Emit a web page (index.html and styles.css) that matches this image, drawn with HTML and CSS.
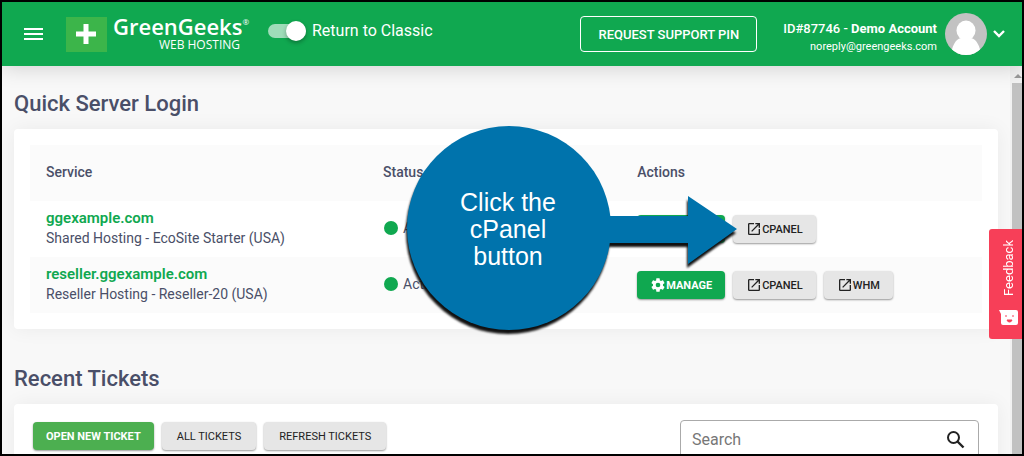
FILE: index.html
```html
<!DOCTYPE html>
<html lang="en">
<head>
<meta charset="utf-8">
<meta name="viewport" content="width=device-width, initial-scale=1">
<title>GreenGeeks Web Hosting</title>
<link rel="stylesheet" href="styles.css">
</head>
<body>
<svg width="0" height="0" class="symbols" aria-hidden="true">
  <symbol id="open" viewBox="0 0 24 24"><path d="M19 19H5V5h7V3H5a2 2 0 0 0-2 2v14a2 2 0 0 0 2 2h14c1.100 0 2-.9 2-2v-7h-2v7zM14 3v2h3.590l-9.830 9.830 1.410 1.410L19 6.410V10h2V3h-7z"/></symbol>
  <symbol id="cog" viewBox="0 0 24 24"><path d="M12 15.500A3.500 3.500 0 0 1 8.500 12 3.500 3.500 0 0 1 12 8.500a3.500 3.500 0 0 1 3.500 3.500 3.500 3.500 0 0 1-3.500 3.500m7.430-2.530c.04-.32.07-.64.07-.97s-.03-.66-.07-1l2.110-1.630c.19-.15.24-.42.12-.64l-2-3.460c-.12-.22-.39-.31-.61-.22l-2.490 1c-.52-.39-1.060-.73-1.690-.98l-.37-2.650A.506.506 0 0 0 14 2h-4c-.25 0-.46.18-.5.420l-.37 2.650c-.63.25-1.170.59-1.690.98l-2.490-1c-.22-.09-.49 0-.61.22l-2 3.460c-.13.22-.07.49.12.64L4.570 11c-.04.34-.07.67-.07 1s.03.65.07.97l-2.110 1.660c-.19.15-.25.42-.12.64l2 3.460c.12.22.39.3.61.22l2.490-1.010c.52.4 1.060.74 1.690.99l.37 2.650c.04.24.25.42.5.42h4c.25 0 .46-.18.5-.42l.37-2.650c.63-.26 1.170-.59 1.690-.99l2.490 1.010c.22.08.49 0 .61-.22l2-3.460c.12-.22.07-.49-.12-.64z"/></symbol>
</svg>

<header class="topbar">
  <button class="icon-btn menu" aria-label="Menu">
    <svg width="20" height="14" viewBox="0 0 20 14"><path d="M0 1h19M0 6h19M0 11h19" stroke="currentColor" stroke-width="2"/></svg>
  </button>
  <a class="logo" href="#">
    <svg width="41" height="35" viewBox="0 0 41 35" aria-hidden="true"><rect width="41" height="35" fill="#3cb54a"/><path d="M20 7v20M10 17h20" stroke="#fff" stroke-width="5"/></svg>
    <span class="brand"><span class="brand-name">GreenGeeks<span class="reg">®</span></span><span class="brand-sub">WEB HOSTING</span></span>
  </a>
  <label class="switch"><input type="checkbox" checked>Return to Classic</label>
  <button class="pin-btn">REQUEST SUPPORT PIN</button>
  <div class="account">
    <div>ID#87746 - <b>Demo Account</b></div>
    <div class="email">noreply@greengeeks.com</div>
  </div>
  <svg class="avatar" width="42" height="42" viewBox="0 0 42 42" role="img" aria-label="Avatar"><defs><clipPath id="disc"><circle cx="21" cy="21" r="21"/></clipPath></defs><g clip-path="url(#disc)"><rect width="42" height="42" fill="#c2c2c2"/><ellipse cx="21" cy="17.500" rx="9.500" ry="10"/><path d="M6 42c1-8 4-16 10-17h10c6 1 9 9 10 17z"/></g></svg>
  <button class="icon-btn" aria-label="Account menu">
    <svg width="14" height="10" viewBox="0 0 14 10"><path d="M2 2l5 5 5-5" fill="none" stroke="currentColor" stroke-width="2.400"/></svg>
  </button>
</header>

<div class="viewport">
  <main>
    <h2>Quick Server Login</h2>
    <section class="card">
      <table>
        <thead><tr><th class="c-service">Service</th><th class="c-status">Status</th><th>Actions</th></tr></thead>
        <tbody>
          <tr>
            <td><a class="host" href="#">ggexample.com</a>Shared Hosting - EcoSite Starter (USA)</td>
            <td><span class="status">Active</span></td>
            <td><div class="actions">
              <button class="btn manage"><svg class="cog"><use href="#cog"/></svg>MANAGE</button>
              <button class="btn"><svg><use href="#open"/></svg>CPANEL</button>
            </div></td>
          </tr>
          <tr>
            <td><a class="host" href="#">reseller.ggexample.com</a>Reseller Hosting - Reseller-20 (USA)</td>
            <td><span class="status">Active</span></td>
            <td><div class="actions">
              <button class="btn manage"><svg class="cog"><use href="#cog"/></svg>MANAGE</button>
              <button class="btn"><svg><use href="#open"/></svg>CPANEL</button>
              <button class="btn"><svg><use href="#open"/></svg>WHM</button>
            </div></td>
          </tr>
        </tbody>
      </table>
    </section>
    <h2 class="second">Recent Tickets</h2>
    <section class="card tickets">
      <div class="actions">
        <button class="btn new">OPEN NEW TICKET</button>
        <button class="btn light">ALL TICKETS</button>
        <button class="btn light">REFRESH TICKETS</button>
      </div>
      <div class="search">
        <input type="text" placeholder="Search" aria-label="Search">
        <svg width="20" height="20" viewBox="0 0 20 20" aria-hidden="true"><circle cx="7.500" cy="7.500" r="5.500" fill="none" stroke="#222" stroke-width="2"/><path d="M11.500 11.500l6 6" stroke="#222" stroke-width="2.400"/></svg>
      </div>
    </section>
  </main>
  <div class="scrollbar" aria-hidden="true"><span class="up"></span><span class="thumb"></span></div>
</div>

<button class="feedback">
  <span>Feedback</span>
  <svg width="20" height="16" viewBox="0 0 20 16" aria-hidden="true"><path d="M0 0h17q2 0 2 2v11q0 2-2 2H4q-2 0-2-2V4z" fill="#fff"/><path d="M7 5v2M14 5v2M8 10h5q-.5 2-2.500 2T8 10z" stroke="#f73f58" fill="#f73f58"/></svg>
</button>

<aside class="callout">
  <svg width="330" height="206" viewBox="0 0 330 206" aria-hidden="true"><circle cx="102" cy="103" r="102"/><path d="M190 91H281V71L330 104 281 139V118H190z"/></svg>
  <p>Click the<br>cPanel<br>button</p>
</aside>
</body>
</html>
```

FILE: styles.css
```css
* { box-sizing: border-box; }

body {
  margin: 0;
  height: 100vh;
  border: 2px solid #000;
  display: flex;
  flex-direction: column;
  overflow: hidden;
  position: relative;
  background: #f8f8f8;
  color: #4a4f68;
  font: 14px/20px Roboto, sans-serif;
}

button { font-family: inherit; cursor: pointer; }
.symbols { position: absolute; }

.topbar {
  flex: none;
  height: 64px;
  padding: 0 16px 0 22px;
  display: flex;
  align-items: center;
  background: #10a850;
  color: #fff;
  box-shadow: 0 2px 20px rgba(0, 0, 0, .16);
  z-index: 1;
}

.icon-btn {
  display: flex;
  padding: 0;
  border: 0;
  background: none;
  color: inherit;
}

.menu { margin-right: 22px; padding-top: 2px; }

.logo {
  display: flex;
  align-items: center;
  gap: 6px;
  color: #fff;
  text-decoration: none;
  font-family: "Open Sans", sans-serif;
}

.brand { display: flex; flex-direction: column; width: 133px; }
.brand-name { font-size: 22px; line-height: 22px; font-weight: 600; white-space: nowrap; }
.reg { font-size: 8px; line-height: 8px; vertical-align: 10px; font-weight: 400; }
.brand-sub { padding-right: 6px; text-align: right; font-size: 12px; line-height: 16px; }

.switch {
  display: flex;
  align-items: center;
  gap: 6px;
  margin: 0 auto 6px 22px;
  font-size: 16px;
}

.switch input {
  appearance: none;
  display: flex;
  align-items: center;
  justify-content: flex-end;
  width: 38px;
  height: 14px;
  margin: 0;
  border-radius: 7px;
  background: #9fdcb9;
}

.switch input::before {
  content: "";
  flex: none;
  width: 20px;
  height: 20px;
  border-radius: 50%;
  background: #fff;
  box-shadow: 0 2px 4px rgba(0, 0, 0, .3);
}

.pin-btn {
  height: 36px;
  padding: 0 17px;
  margin-right: 26px;
  border: 1px solid #fff;
  border-radius: 4px;
  background: none;
  color: #fff;
  font-size: 13px;
  font-weight: 500;
}

.account { padding-top: 8px; font-size: 13px; font-weight: 500; line-height: 18px; text-align: right; }
.account b { font-weight: 700; }
.email { font-size: 11px; font-weight: 400; }
.avatar { margin: 0 5px 0 8px; fill: #fff; }

.viewport { flex: 1; min-height: 0; display: flex; }
main { flex: 1; min-width: 0; padding: 0 12px; }

h2 {
  margin: 0;
  padding: 23px 0 10px;
  font-size: 22px;
  line-height: 30px;
  font-weight: 500;
}

.second { padding-top: 35px; }

.card {
  padding: 16px;
  border-radius: 4px;
  background: #fff;
  box-shadow: 0 0 20px rgba(0, 0, 0, .06);
}

table { width: 100%; border-collapse: collapse; table-layout: fixed; }
th, td { height: 56px; padding: 0 16px 2px; text-align: left; }
th { font-weight: 500; }
tr:nth-child(odd) th, tr:nth-child(even) td { background: #fbfbfb; }
.c-service { width: 35.400%; }
.c-status { width: 26.700%; }

.host {
  display: block;
  color: #10a850;
  font-size: 15px;
  font-weight: 600;
  text-decoration: none;
}

.status { display: flex; align-items: center; gap: 5px; padding-left: 1px; }
.status::before {
  content: "";
  width: 14px;
  height: 14px;
  border-radius: 50%;
  background: #10a850;
}

.actions { display: flex; gap: 8px; }
td .actions { padding-top: 2px; }

.btn {
  display: flex;
  align-items: center;
  height: 28px;
  padding: 0 13px;
  border: 0;
  border-radius: 4px;
  background: #e6e6e6;
  color: #222;
  font-size: 11px;
  font-weight: 500;
  white-space: nowrap;
  box-shadow: 0 1px 2px rgba(0, 0, 0, .4);
}

.btn svg { width: 16px; height: 16px; fill: currentColor; }
.manage { background: #10a850; color: #fff; font-weight: 700; }
.new { background: #4caf50; color: #fff; font-weight: 700; }
.light { padding: 0 15px; font-weight: 400; }

.tickets {
  display: flex;
  align-items: flex-start;
  justify-content: space-between;
  padding: 16px 19px;
}

.tickets .actions { padding-top: 2px; }

.search {
  display: flex;
  align-items: center;
  flex: 0 1 299px;
  height: 40px;
  padding: 0 12px 0 11px;
  border: 1px solid #aaa;
  border-radius: 4px;
}

.search input {
  flex: 1;
  min-width: 0;
  padding: 0;
  border: 0;
  outline: 0;
  background: none;
  font: 16px/20px Roboto, sans-serif;
}

.search input::placeholder { color: #777; }

.scrollbar { width: 12px; display: flex; flex-direction: column; background: #f1f1f1; }
.up { margin: 8px 2px 5px 4px; border: 4px solid transparent; border-top: 0; border-bottom-color: #999; }
.thumb { flex: 1; margin-left: 2px; background: #c1c1c1; }

.feedback {
  position: absolute;
  right: 0;
  top: 227px;
  z-index: 2;
  width: 33px;
  height: 110px;
  padding: 11px 0 13px 6px;
  display: flex;
  flex-direction: column;
  align-items: center;
  justify-content: space-between;
  border: 0;
  border-radius: 3px 0 0 3px;
  background: #f73f58;
  color: #fff;
  font-size: 13px;
  line-height: 16px;
}

.feedback span { writing-mode: vertical-rl; rotate: 180deg; }

.callout { position: absolute; left: 405px; top: 123px; }
.callout svg { display: block; overflow: visible; fill: #0073ac; filter: drop-shadow(-1px 4px 1px #111); }
.callout p {
  position: absolute;
  left: 0;
  top: 64px;
  width: 202px;
  margin: 0;
  color: #fff;
  text-align: center;
  font: 25px/27px "Liberation Sans", Arial, sans-serif;
}
```
